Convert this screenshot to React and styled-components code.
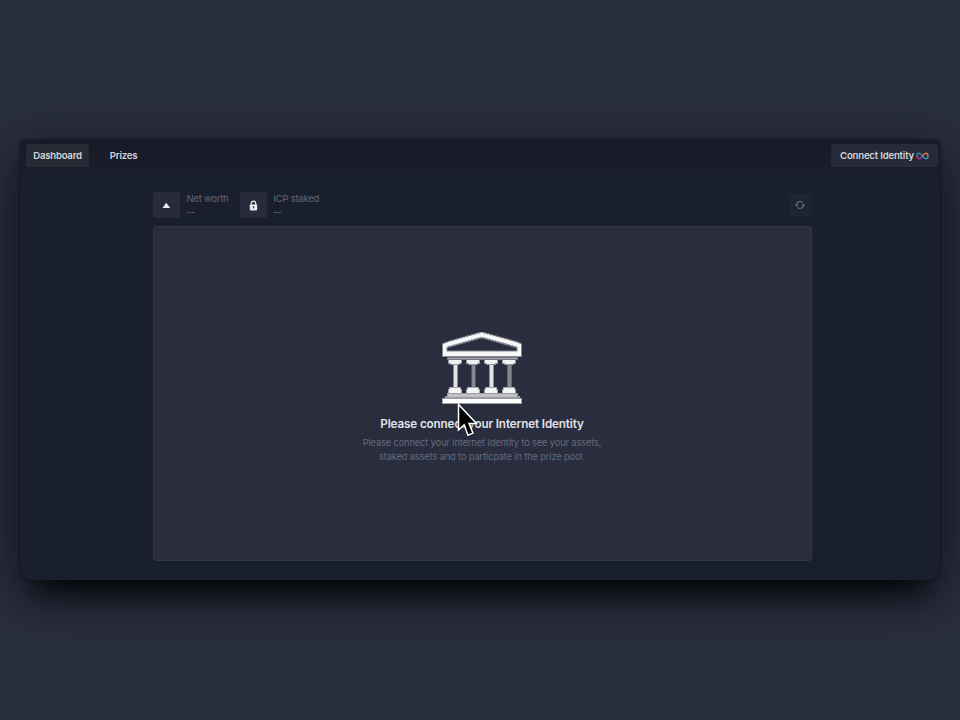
import React from "react";
import styled, { createGlobalStyle } from "styled-components";

const GlobalStyle = createGlobalStyle`
  * { box-sizing: border-box; }
  body {
    margin: 0;
    background: #292e3e;
    font-family: Inter, "Liberation Sans", sans-serif;
    overflow: hidden;
  }
  button { font: inherit; border: 0; padding: 0; }
  h1, p { margin: 0; }
`;

const Stage = styled.main`
  height: 720px;
  padding: 140px 20px;
  background: #292e3e;
`;

const Window = styled.div`
  height: 440px;
  border-radius: 7px 7px 12px 12px;
  background: #1a1f2e;
  box-shadow: 0 0 3px rgba(8, 10, 18, 0.6), 0 14px 52px rgba(4, 5, 8, 0.66),
    0 26px 24px -16px rgba(4, 4, 6, 0.8);
`;

const Header = styled.header`
  display: flex;
  align-items: flex-start;
  justify-content: space-between;
  height: 32px;
  padding: 4px 2px 0 6px;
  border-radius: 7px 7px 0 0;
  background: linear-gradient(#181b27, #191c29 75%, #1a1f2e);
`;

const Nav = styled.nav`
  display: flex;
  gap: 11px;
`;

const NavButton = styled.button`
  height: 23px;
  width: ${(p) => (p.$active ? 63 : 47)}px;
  border-radius: 2px;
  background: ${(p) => (p.$active ? "#272a35" : "transparent")};
  color: #d4d5db;
  font-size: 9.6px;
  letter-spacing: -0.22px;
  font-weight: 600;
`;

const ConnectButton = styled.button`
  display: flex;
  align-items: center;
  gap: 2px;
  width: 107px;
  height: 23px;
  padding-left: 9px;
  border-radius: 3px;
  background: #272a38;
  color: #d4d5db;
  font-size: 9.6px;
  letter-spacing: -0.19px;
  font-weight: 600;
  white-space: nowrap;
`;

const Content = styled.section`
  width: 792px;
  padding: 20px 0 0 133px;
`;

const Stats = styled.div`
  display: flex;
  height: 26px;
`;

const Stat = styled.div`
  display: flex;
  gap: 6.5px;
  width: 87px;
`;

const Tile = styled.div`
  display: flex;
  flex: none;
  align-items: center;
  justify-content: center;
  width: 27px;
  height: 26px;
  border-radius: 3px;
  background: #272b3b;
`;

const StatText = styled.div`
  display: flex;
  flex-direction: column;
  justify-content: space-between;
  color: #636674;
  font-size: 9.6px;
  letter-spacing: -0.3px;
  line-height: 13px;
  white-space: nowrap;
`;

const RefreshButton = styled.button`
  display: flex;
  align-items: center;
  justify-content: center;
  width: 23px;
  height: 23px;
  margin: 2px 0 0 auto;
  padding: 0 2px 1px 0;
  border-radius: 3px;
  background: #1f2434;
`;

const Card = styled.article`
  display: flex;
  flex-direction: column;
  align-items: center;
  height: 335px;
  margin-top: 8px;
  padding-top: 105px;
  border: 1px solid #303547;
  border-top-color: #34394a;
  border-radius: 4px;
  background: #292d3e;
`;

const Title = styled.h1`
  margin-top: 11px;
  margin-right: 1px;
  color: #e2e3e8;
  font-size: 11.7px;
  letter-spacing: -0.13px;
  line-height: 16px;
  font-weight: 600;
  white-space: nowrap;
`;

const Description = styled.p`
  margin-top: 4px;
  margin-right: 1px;
  color: #656a7b;
  font-size: 9.3px;
  letter-spacing: -0.15px;
  line-height: 14.4px;
  text-align: center;
  white-space: nowrap;
`;

const TempleIcon = styled.svg`
  display: block;
  width: 82px;
  height: 73px;
  margin-right: 1px;
`;

const Cursor = styled.svg`
  position: absolute;
  left: 455px;
  top: 401px;
  width: 25px;
  height: 38px;
  filter: drop-shadow(1px 1px 1px rgba(0, 0, 0, 0.35));
`;

const columns = [
  { x: 8, shaft: "#8b8d94", core: "#e2e2e5" },
  { x: 26, shaft: "#55575f", core: "#85878d" },
  { x: 44, shaft: "#8b8d94", core: "#e2e2e5" },
  { x: 62, shaft: "#66686f", core: "#85878d" },
];

function Temple() {
  return (
    <TempleIcon viewBox="0 0 82 73">
      <path d="M1 25V11.5L7 9 38.5 0H42.5L75 9 81 11.5V25Z" fill="#858891" />
      <path d="M2 24V12.3L7 10 39.5.8H42L75 10 80 12.3V24Z" fill="#f8f8f9" />
      <path d="M5.5 19.5V15L39.5 5.2H42L76.5 15V19.5Z" fill="#85888f" />
      <path d="M6.5 18.5V16L40 6.5H41.5L75.5 16V18.5Z" fill="#292d3e" />
      <path
        d="M6 10 39 .8M76 10 42 .8M7 14.7 39.5 5.4M75 14.7 42 5.4"
        fill="none"
        stroke="#60636e"
        strokeWidth="1"
        strokeDasharray="1 2"
      />
      <g shapeRendering="crispEdges">
        <path d="M6 25H77V28H6Z" fill="#777283" />
        <path d="M7 26H76V27H7Z" fill="#aaa6b1" />
        {columns.map((c) => (
          <g key={c.x}>
            <path d={`M${c.x - 1} 28h14v4h-2v1h-10v-1h-2z`} fill="#92949a" />
            <path d={`M${c.x} 28h12v3h-2v1h-8v-1h-2z`} fill="#f2f2f3" />
            <path d={`M${c.x + 4} 33h5v23h-5z`} fill={c.shaft} />
            <path d={`M${c.x + 5} 33h3v23h-3z`} fill={c.core} />
            <path d={`M${c.x} 55h12v2h1v5h-14v-5h1z`} fill="#a5a7ad" />
            <path d={`M${c.x + 1} 56h10v2h1v3h-12v-3h1z`} fill="#f5f5f6" />
          </g>
        ))}
        <path d="M6 61H77V64H79V66H4V64H6Z" fill="#9b9ca1" />
        <path d="M7 62H76V65H7Z" fill="#c1c1c4" />
        <path d="M1 66H81V72H1Z" fill="#9b9ca2" />
        <path d="M2 67H80V71H2Z" fill="#ffffff" />
      </g>
    </TempleIcon>
  );
}

function Infinity() {
  return (
    <svg width="13" height="8" viewBox="0 0 13 8" fill="none" strokeWidth="1.5">
      <path d="M6.5 4C5.2 2.2 4.4 1.2 3.2 1.2 1.8 1.2 1 2.4 1 4" stroke="#278da8" />
      <path d="M1 4C1 5.6 1.8 6.8 3.2 6.8 4.4 6.8 5.2 5.8 6.5 4" stroke="#a02f91" />
      <path d="M6.5 4C7.8 2.2 8.6 1.2 9.8 1.2 11.2 1.2 12 2.4 12 4" stroke="#d67247" />
      <path d="M12 4C12 5.6 11.2 6.8 9.8 6.8 8.6 6.8 7.8 5.8 6.5 4" stroke="#328aae" />
    </svg>
  );
}

export default function App() {
  return (
    <>
      <GlobalStyle />
      <Stage>
        <Window>
          <Header>
            <Nav>
              <NavButton $active>Dashboard</NavButton>
              <NavButton>Prizes</NavButton>
            </Nav>
            <ConnectButton>
              Connect Identity
              <Infinity />
            </ConnectButton>
          </Header>
          <Content>
            <Stats>
              <Stat>
                <Tile>
                  <svg width="9" height="7" viewBox="0 0 9 7">
                    <path d="M4.2.8 8.2 6H.5Z" fill="#eeeef2" />
                  </svg>
                </Tile>
                <StatText><span>Net worth</span><span>--</span></StatText>
              </Stat>
              <Stat>
                <Tile>
                  <svg width="9" height="11" viewBox="0 0 9 11">
                    <path d="M2.3 5V3.2C2.3.3 6.7.3 6.7 3.2V5" fill="none" stroke="#e8e9ee" strokeWidth="1.3" />
                    <rect x=".8" y="4.4" width="7.4" height="6" rx=".8" fill="#e8e9ee" />
                    <path d="M4.5 6.3v2" stroke="#414453" strokeWidth="1.4" />
                  </svg>
                </Tile>
                <StatText><span>ICP staked</span><span>--</span></StatText>
              </Stat>
              <RefreshButton aria-label="Refresh">
                <svg width="10" height="10" viewBox="0 0 10 10" fill="none" stroke="#686c7a" strokeWidth="1.1">
                  <path d="M1.6 5.5A3.4 3.4 0 0 1 7.4 2.6M8.4 4.5A3.4 3.4 0 0 1 2.6 7.4" />
                  <path d="M.4 4.6 1.6 5.8 2.8 4.6M7.2 5.4 8.4 4.2 9.6 5.4" />
                </svg>
              </RefreshButton>
            </Stats>
            <Card>
              <Temple />
              <Title>Please connect your Internet Identity</Title>
              <Description>
                Please connect your Internet Identity to see your assets,
                <br />
                staked assets and to particpate in the prize pool.
              </Description>
            </Card>
          </Content>
        </Window>
        <Cursor viewBox="0 0 25 38">
          <path
            d="M3.5 3.5V29L9.2 23.8 13 34.2 18 32.2 14 22.6H21.5Z"
            fill="#030304"
            stroke="#fff"
            strokeWidth="1.5"
          />
        </Cursor>
      </Stage>
    </>
  );
}
